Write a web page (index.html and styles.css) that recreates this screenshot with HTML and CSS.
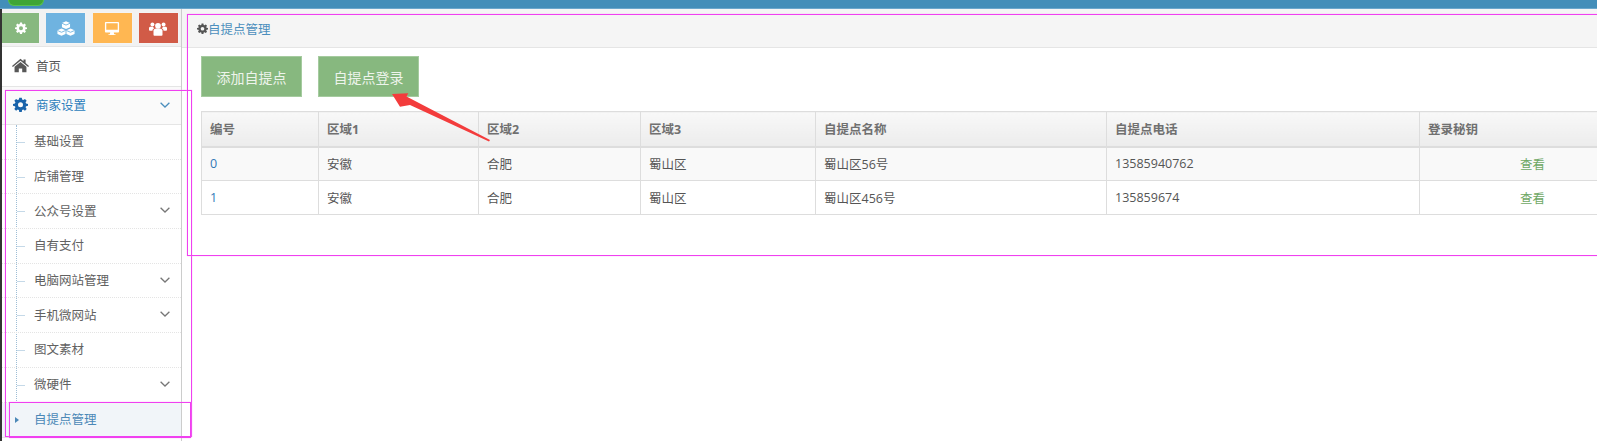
FILE: index.html
```html
<!DOCTYPE html>
<html lang="zh">
<head>
<meta charset="utf-8">
<title>自提点管理</title>
<link rel="stylesheet" href="styles.css">
</head>
<body>
<svg class="defs" width="0" height="0" aria-hidden="true">
  <defs>
    <symbol id="cog" viewBox="0 0 24 24">
      <path fill="currentColor" fill-rule="evenodd" d="M10 1h4l.6 3.1 1.9.8L19.1 3.100l2.800 2.800-1.800 2.600.8 1.900L24 11v3l-3.100.6-.8 1.900 1.800 2.600-2.800 2.800-2.600-1.800-1.900.8L14 24h-4l-.6-3.100-1.900-.8-2.600 1.800-2.800-2.800 1.800-2.600-.8-1.900L0 14v-3l3.100-.6.8-1.900L2.100 5.900l2.800-2.800 2.600 1.800 1.900-.8zM12 8.500a4 4 0 1 0 0 8 4 4 0 0 0 0-8z"/>
    </symbol>
    <symbol id="chev" viewBox="0 0 10 6">
      <path fill="none" stroke="currentColor" stroke-width="1.300" d="M.6.8L5 5 9.400.8"/>
    </symbol>
  </defs>
</svg>
<header class="navbar"><span class="logo"></span></header>
<div class="layout">
  <aside class="sidebar">
    <div class="shortcuts">
      <a class="sc sc-green"><svg class="sc-icon-sm"><use href="#cog"/></svg></a>
      <a class="sc sc-blue">
        <svg class="sc-icon" viewBox="0 0 20 16"><path fill="currentColor" d="M10 0l4.500 2v4.500L10 8.500 5.500 6.500V2zM5 8l4.500 2v4L5 16 .5 14v-4zM15 8l4.500 2v4L15 16l-4.500-2v-4z"/><path fill="none" stroke="#6fb3e0" stroke-width="1" d="M5.500 2.200l4.500 2 4.500-2M.5 10.200l4.500 2 4.500-2M10.500 10.200l4.500 2 4.500-2"/></svg>
      </a>
      <a class="sc sc-orange">
        <svg class="sc-icon" viewBox="0 0 20 17"><path fill="currentColor" fill-rule="evenodd" d="M3 1h14a1 1 0 0 1 1 1v10a1 1 0 0 1-1 1h-5l.5 2H14v1H6v-1h1.500L8 13H3a1 1 0 0 1-1-1V2a1 1 0 0 1 1-1zM3.500 2.500V10h13V2.500z"/></svg>
      </a>
      <a class="sc sc-red">
        <svg class="sc-icon" viewBox="0 0 20 16"><circle cx="10" cy="5" r="3.200" fill="currentColor"/><circle cx="3.800" cy="3.500" r="2.200" fill="currentColor"/><circle cx="16.200" cy="3.500" r="2.200" fill="currentColor"/><path fill="currentColor" d="M5 10a3 3 0 0 1 3-2h4a3 3 0 0 1 3 2v5a1 1 0 0 1-1 1H6a1 1 0 0 1-1-1zM0 7.500C0 6.500 1 6 2 6h2.500c.3 1 1 1.500 1.500 1.800C4.500 8.300 4 9.200 3.800 10.500H1c-.6 0-1-.4-1-1zM20 7.500c0-1-1-1.500-2-1.500h-2.500c-.3 1-1 1.500-1.500 1.800 1.500.5 2 1.400 2.200 2.700H19c.6 0 1-.4 1-1z"/></svg>
      </a>
    </div>
    <nav class="menu">
      <a class="top-item">
        <svg class="top-icon home" viewBox="0 0 20 16"><path fill="currentColor" d="M10 0l3.500 3V1H16v4.200L20 8.500 19 9.700 10 2.300 1 9.700 0 8.500zM3 9.500l7-5.700 7 5.700V16h-5v-4.500H8V16H3z"/></svg>
        <span>首页</span>
      </a>
      <a class="top-item open">
        <svg class="top-icon"><use href="#cog"/></svg>
        <span>商家设置</span>
        <svg class="chev"><use href="#chev"/></svg>
      </a>
      <ul class="submenu">
        <li class="sub"><span>基础设置</span></li>
        <li class="sub"><span>店铺管理</span></li>
        <li class="sub"><span>公众号设置</span><svg class="chev"><use href="#chev"/></svg></li>
        <li class="sub"><span>自有支付</span></li>
        <li class="sub"><span>电脑网站管理</span><svg class="chev"><use href="#chev"/></svg></li>
        <li class="sub"><span>手机微网站</span><svg class="chev"><use href="#chev"/></svg></li>
        <li class="sub"><span>图文素材</span></li>
        <li class="sub"><span>微硬件</span><svg class="chev"><use href="#chev"/></svg></li>
        <li class="sub active"><span>自提点管理</span></li>
      </ul>
    </nav>
  </aside>
  <main class="main">
    <div class="crumb"><svg class="crumb-icon"><use href="#cog"/></svg><a>自提点管理</a></div>
    <div class="actions">
      <a class="btn">添加自提点</a>
      <a class="btn">自提点登录</a>
    </div>
    <table class="grid">
      <colgroup>
        <col class="c1"><col class="c2"><col class="c3"><col class="c4"><col class="c5"><col class="c6"><col class="c7">
      </colgroup>
      <thead>
        <tr><th>编号</th><th>区域1</th><th>区域2</th><th>区域3</th><th>自提点名称</th><th>自提点电话</th><th>登录秘钥</th></tr>
      </thead>
      <tbody>
        <tr class="odd"><td class="id">0</td><td>安徽</td><td>合肥</td><td>蜀山区</td><td>蜀山区56号</td><td>13585940762</td><td class="view">查看</td></tr>
        <tr><td class="id">1</td><td>安徽</td><td>合肥</td><td>蜀山区</td><td>蜀山区456号</td><td>135859674</td><td class="view">查看</td></tr>
      </tbody>
    </table>
  </main>
</div>
<div class="mark mark-menu"></div>
<div class="mark mark-item"></div>
<div class="mark mark-main"></div>
<svg class="arrow" viewBox="0 0 110 60" width="110" height="60"><polygon fill="#f33c3c" points="1,3 17.300,2.300 15.500,5.500 99,49 98,50.500 19,14 9,15.700"/></svg>
</body>
</html>
```
FILE: styles.css
```css
* { box-sizing: border-box; }
html, body { margin: 0; padding: 0; height: 441px; overflow: hidden; background: #fff; }
body {
  font-family: "Open Sans", "Noto Sans CJK SC", sans-serif;
  font-size: 12.500px;
  color: #555;
  display: flex;
  flex-direction: column;
  position: relative;
}
.defs { position: absolute; }
ul { list-style: none; margin: 0; padding: 0; }

.navbar {
  flex: 0 0 9px;
  background: #438eb9;
  border-bottom: 1px solid #6ba7cc;
  padding-left: 8px;
}
.logo {
  display: block;
  width: 36px;
  height: 6px;
  background: #3fa535;
  border: 1px solid #58c24b;
  border-top: 0;
  border-radius: 0 0 6px 6px;
}

.layout { flex: 1; display: flex; min-height: 0; }

.sidebar {
  flex: 0 0 182px;
  border-left: 2px solid #333;
  border-right: 1px solid #ccc;
  background: #fff;
  display: flex;
  flex-direction: column;
}
.shortcuts {
  height: 38px;
  background: #f2f2f2;
  border-bottom: 1px solid #e5e5e5;
  padding: 3px 2px 0 0;
  display: flex;
  justify-content: space-between;
}
.sc {
  width: 40px;
  height: 32px;
  border: 1px solid #f4f4f4;
  border-left-width: 0;
  color: #fff;
  display: flex;
  align-items: center;
  justify-content: center;
}
.sc:first-child { width: 38px; }
.sc-green { background: #87b87f; }
.sc-blue { background: #6fb3e0; }
.sc-orange { background: #ffb752; }
.sc-red { background: #d15b47; }
.sc-icon { width: 18px; height: 15px; }
.sc-icon-sm { width: 12px; height: 12px; }

.top-item {
  height: 40px;
  display: flex;
  align-items: center;
  padding: 0 0 2px 10px;
  color: #585858;
  border-bottom: 1px solid #e5e5e5;
  background: #fff;
}
.top-icon { width: 17px; height: 15px; margin-right: 7px; flex: none; color: #585858; }
.top-item.open { height: 38px; color: #2b7dbc; background: #fafafa; }
.top-item.open .top-icon { color: #1963aa; }
.chev { width: 10px; height: 6px; margin-left: auto; margin-right: 11px; color: #777; }
.top-item.open .chev { color: #4c8fbd; }

.submenu {
  position: relative;
  border-bottom: 1px solid #e5e5e5;
}
.submenu::before {
  content: "";
  position: absolute;
  left: 14px;
  top: 0;
  bottom: 0;
  border-left: 1px dotted #9dbdd6;
}
.sub {
  height: 34.700px;
  position: relative;
  display: flex;
  align-items: center;
  padding: 0 0 2px 32px;
  color: #616161;
  border-bottom: 1px dotted #e4e4e4;
}
.sub::before {
  content: "";
  position: absolute;
  left: 15px;
  top: 50%;
  width: 8px;
  border-top: 1px solid #c5d9e8;
}
.sub.active { color: #4b88b7; background: #f1f5f9; border-bottom: 0; }
.sub.active::before {
  left: 13px;
  top: calc(50% - 3px);
  width: 0;
  border-top: 3px solid transparent;
  border-bottom: 3px solid transparent;
  border-left: 4px solid #4b88b7;
}

.main { flex: 1; min-width: 0; overflow: hidden; }
.crumb {
  height: 39px;
  background: #f5f5f5;
  border-bottom: 1px solid #e5e5e5;
  padding: 0 0 0 15px;
  display: flex;
  align-items: center;
  color: #4c8fbd;
  font-size: 12.500px;
}
.crumb-icon { width: 11px; height: 11px; color: #555; flex: none; }

.actions { display: flex; gap: 16px; padding: 8px 0 0 19px; }
.btn {
  width: 101px;
  height: 41px;
  display: flex;
  align-items: center;
  justify-content: center;
  background: #87b87f;
  border: 1px solid #a5cb9f;
  color: #eef4ec;
  font-size: 14px;
}

.grid {
  border-collapse: collapse;
  table-layout: fixed;
  width: 1444px;
  margin: 14px 0 0 19px;
  font-size: 12.500px;
}
.c1 { width: 117px; }
.c2 { width: 160px; }
.c3 { width: 162px; }
.c4 { width: 175px; }
.c5 { width: 291px; }
.c6 { width: 313px; }
.c7 { width: 226px; }
.grid th, .grid td { border: 1px solid #ddd; padding: 0 8px; text-align: left; }
.grid th {
  height: 35px;
  color: #707070;
  font-weight: 700;
  background: linear-gradient(#f8f8f8, #ececec);
  border-bottom: 2px solid #ddd;
}
.grid td { height: 34px; color: #555; }
.odd td { background: #f9f9f9; }
.grid td.id { color: #337ab7; }
.grid td.view { color: #6fa865; text-align: center; }

.mark { position: absolute; border: 1px solid #f040f0; box-shadow: 0 0 1px #f9a0f5; pointer-events: none; }
.mark-menu { left: 5px; top: 90px; width: 187px; height: 347px; }
.mark-item { left: 9px; top: 402px; width: 182px; height: 36px; }
.mark-main { left: 187px; top: 14px; width: 1420px; height: 242px; }
.arrow { position: absolute; left: 391px; top: 91px; }
```
